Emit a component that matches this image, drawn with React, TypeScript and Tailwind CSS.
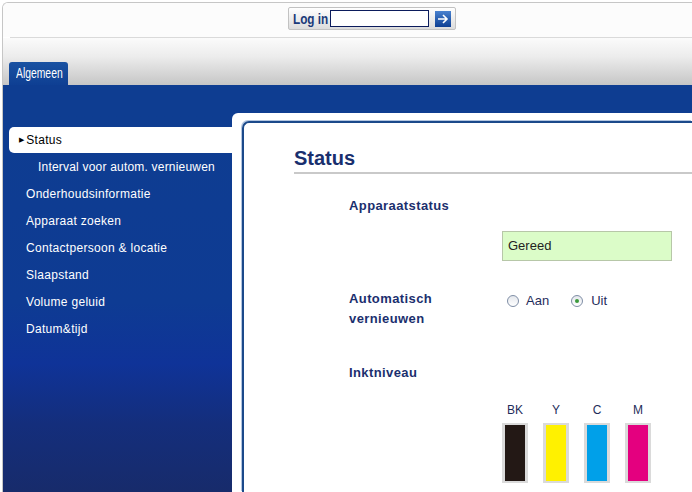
import React from "react";

const menu = [
	"Onderhoudsinformatie",
	"Apparaat zoeken",
	"Contactpersoon & locatie",
	"Slaapstand",
	"Volume geluid",
	"Datum&tijd",
];

const inks = [
	{ label: "BK", color: "bg-[#231815]" },
	{ label: "Y", color: "bg-[#fff100]" },
	{ label: "C", color: "bg-[#00a0e9]" },
	{ label: "M", color: "bg-[#e4007f]" },
];

function Radio({ checked }: { checked?: boolean }) {
	return (
		<span className="flex h-[12px] w-[12px] items-center justify-center rounded-full border border-[#7f8ea6] bg-[linear-gradient(to_bottom,#e4e7ec,#ffffff)]">
			{checked && <span className="h-[4px] w-[4px] rounded-full bg-[#3c9a3c]" />}
		</span>
	);
}

function Sidebar() {
	return (
		<div className="w-[229px] shrink-0 bg-[linear-gradient(to_bottom,#0e3d91_0%,#0e3b93_50%,#0f3398_66%,#142e7c_82%,#172b6b_100%)] pt-[14px] text-[12px] tracking-[0.3px] text-white">
			<div className="ml-[6px] flex h-[26px] items-center rounded-l-[5px] bg-white pl-[10px] text-black">
				<span className="mr-[2px] text-[7px]">▶</span>
				<span>Status</span>
			</div>
			<div className="flex h-[27px] items-center pl-[35px] tracking-[0.2px]">
				Interval voor autom. vernieuwen
			</div>
			{menu.map((item) => (
				<div key={item} className="flex h-[27px] items-center pl-[23px]">
					{item}
				</div>
			))}
		</div>
	);
}

function Content() {
	return (
		<div className="flex-1 bg-[#0e3d91]">
			<div className="h-full rounded-tl-[6px] bg-white pl-[10px] pt-[8px]">
				<div className="h-full rounded-tl-[7px] border-l-2 border-t-2 border-[#1b4a8b] pl-[50px] pt-[23px] shadow-[-1px_-1px_0_#b3c6e0]">
					<div className="border-b-2 border-[#c9c9c9] pb-[2px]">
						<h1 className="text-[20px] font-bold leading-[24px] text-[#192f6e]">Status</h1>
					</div>

					<div className="text-[13px] font-bold leading-[20px] tracking-[0.4px] text-[#1b2f6e]">
						<div className="ml-[55px] mt-[22px]">Apparaatstatus</div>
					</div>

					<div className="ml-[208px] mt-[15px] flex h-[30px] w-[170px] items-center border border-[#b7c7a8] bg-[#dbfcc8] pl-[5px] text-[13px] text-[#222]">
						Gereed
					</div>

					<div className="ml-[55px] mt-[28px] flex">
						<div className="w-[153px] text-[13px] font-bold leading-[20px] tracking-[0.4px] text-[#1b2f6e]">
							Automatisch
							<br />
							vernieuwen
						</div>
						<div className="mt-[2px] flex h-[20px] items-center pl-[5px] text-[13px] text-[#1f2d5c]">
							<Radio />
							<span className="ml-[7px]">Aan</span>
							<span className="ml-[22px]">
								<Radio checked />
							</span>
							<span className="ml-[8px]">Uit</span>
						</div>
					</div>

					<div className="ml-[55px] mt-[34px] text-[13px] font-bold leading-[20px] tracking-[0.4px] text-[#1b2f6e]">
						Inktniveau
					</div>

					<div className="ml-[208px] mt-[20px] flex gap-[15px]">
						{inks.map((ink) => (
							<div key={ink.label} className="flex w-[26px] flex-col items-center">
								<div className="text-[12px] leading-[14px] text-[#1e2d5a]">{ink.label}</div>
								<div className="mt-[6px] h-[60px] w-[26px] border-x-[3px] border-y-2 border-[#dadada]">
									<div className={`h-full w-full ${ink.color}`} />
								</div>
							</div>
						))}
					</div>
				</div>
			</div>
		</div>
	);
}

export default function App() {
	return (
		<div className="h-[492px] w-[692px] overflow-hidden bg-white font-['Liberation_Sans',Arial,sans-serif]">
			<div className="ml-[2px] mt-[2px] flex h-[490px] flex-col overflow-hidden rounded-tl-[6px] border-l border-t border-[#c6c6c6]">
				{/* header with login */}
				<div className="h-[34px] shrink-0 bg-[#fcfcfc] pt-[4px]">
					<div className="ml-[285px] flex h-[23px] w-[168px] items-center rounded-[2px] border border-[#c2c2c2] bg-[linear-gradient(to_bottom,#ffffff,#dcdcdc)] pl-[4px]">
						<div className="w-[36px] shrink-0 overflow-visible">
							<span className="inline-block origin-left scale-x-[0.84] whitespace-nowrap text-[14px] font-bold text-[#1a3a7a]">
								Log in
							</span>
						</div>
						<div className="ml-[1px] h-[17px] w-[99px] shrink-0 border border-[#0b1b5c] bg-white" />
						<div className="ml-[6px] flex h-[16px] w-[16px] shrink-0 items-center justify-center bg-[linear-gradient(to_bottom,#4a82cf,#0d3f93)]">
							<svg width="12" height="10" viewBox="0 0 12 10" fill="none" stroke="white" strokeWidth="1.6">
								<path d="M1 5h9M6 1l4 4-4 4" />
							</svg>
						</div>
					</div>
				</div>
				<div className="ml-[7px] h-px shrink-0 bg-[#dadada]" />
				<div className="flex h-[47px] shrink-0 items-end bg-[linear-gradient(to_bottom,#fbfbfb,#ececec_40%,#c6c6c6)]">
					<div className="ml-[6px] flex h-[23px] w-[59px] items-center rounded-t-[3px] bg-[linear-gradient(to_bottom,#1a52a2,#0e3f93)] pl-[7px] text-white">
						<span className="inline-block origin-left scale-x-[0.74] whitespace-nowrap text-[14px]">Algemeen</span>
					</div>
				</div>
				<div className="h-[28px] shrink-0 bg-[#0e3d91]" />
				<div className="flex flex-1">
					<Sidebar />
					<Content />
				</div>
			</div>
		</div>
	);
}
